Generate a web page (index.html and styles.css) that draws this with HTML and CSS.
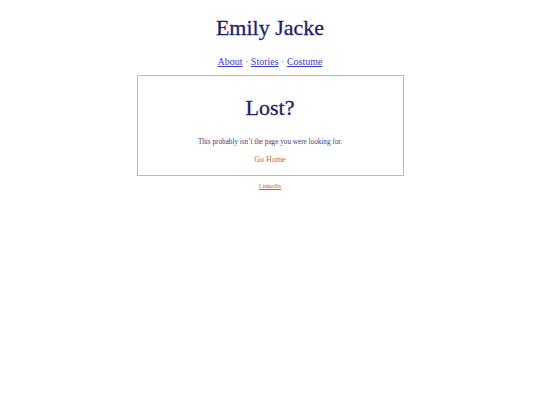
FILE: index.html
```html
<!DOCTYPE html>
<html>
<head>
<meta charset="utf-8">
<link rel="stylesheet" href="styles.css">
</head>
<body>
<header class="site-header">
  <h1 class="site-title">Emily Jacke</h1>
  <nav class="site-nav"><a href="#">About</a> · <a href="#">Stories</a> · <a href="#">Costume</a></nav>
</header>
<main class="card">
  <h2 class="card-title">Lost?</h2>
  <p class="card-text">This probably isn’t the page you were looking for.</p>
  <a class="card-link" href="#">Go Home</a>
</main>
<footer class="site-footer"><a href="#">LinkedIn</a></footer>
</body>
</html>
```
FILE: styles.css
```css
body {
  margin: 0;
  background: #ffffff;
  font-family: "Liberation Serif", "DejaVu Serif", serif;
  color: #1f1d6b;
}
.site-header {
  text-align: center;
  padding-top: 14px;
}
.site-title {
  margin: 0;
  font-size: 22px;
  line-height: 28px;
  font-weight: normal;
  color: #1f1d6b;
  -webkit-text-stroke: 0.3px #1f1d6b;
}
.site-nav {
  margin-top: 13px;
  font-size: 10px;
  line-height: 14px;
  color: #6a6a9a;
}
.site-nav a {
  color: #3a3ac8;
}
.card {
  width: 265px;
  height: 99px;
  margin: 6px auto 0;
  border: 1px solid #e2ad98;
  box-sizing: content-box;
  text-align: center;
  display: flex;
  flex-direction: column;
  align-items: center;
}
.card-title {
  margin: 18px 0 0;
  font-size: 22px;
  line-height: 28px;
  font-weight: normal;
  color: #1f1d6b;
  -webkit-text-stroke: 0.3px #1f1d6b;
}
.card-text {
  margin: 16px 0 0;
  font-size: 7.2px;
  line-height: 9px;
  color: #3c3a74;
}
.card-link {
  margin-top: 8px;
  font-size: 8px;
  line-height: 10px;
  color: #d0603a;
  text-decoration: none;
}
.site-footer {
  text-align: center;
  margin-top: 6px;
  font-size: 6px;
  line-height: 8px;
}
.site-footer a {
  color: #d0603a;
}
```
